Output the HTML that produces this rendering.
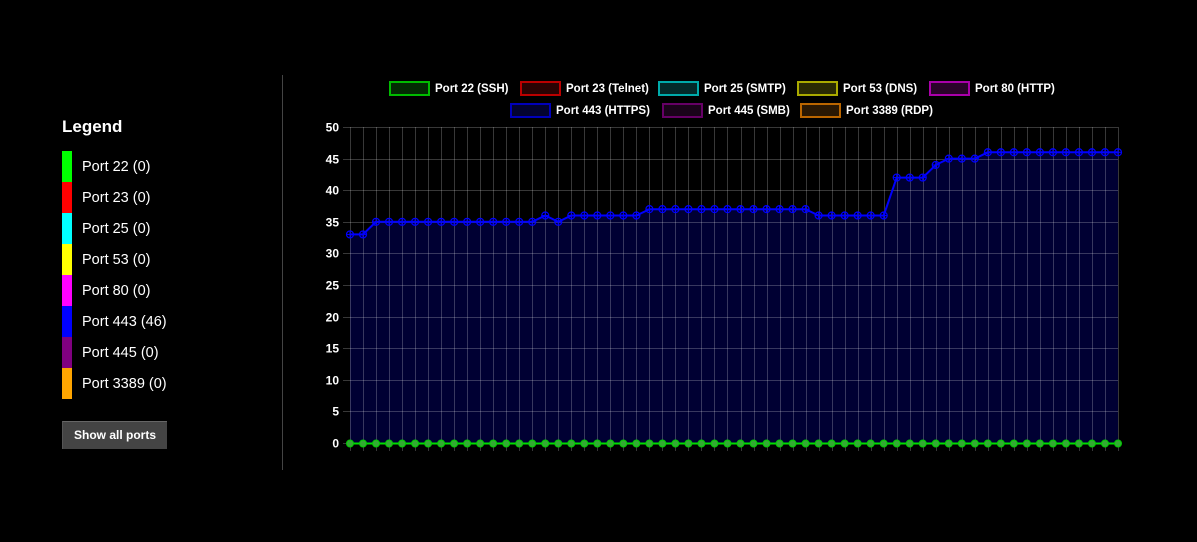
<!DOCTYPE html>
<html><head><meta charset="utf-8"><style>
html,body{margin:0;padding:0;background:#000;width:1197px;height:542px;overflow:hidden;font-family:"Liberation Sans",Arial,sans-serif;color:#fff}
.lg{position:absolute;left:62px;top:117px;width:200px}
.lg h3{margin:0;font-size:17px;font-weight:bold;height:34px}
.row{height:31px;position:relative}
.sw{position:absolute;left:0;top:0;width:10px;height:31px}
.row span{position:absolute;left:20px;top:8px;font-size:14.5px;white-space:nowrap}
.btn{position:absolute;left:62px;top:421px;width:104px;height:27px;background:#444;border-top:1px solid #666;border-left:1px solid #555;font-size:12px;line-height:27px;text-align:center;font-weight:bold}
.div{position:absolute;left:282px;top:75px;width:1px;height:395px;background:#444}
.cl{position:absolute;font-size:11.5px;font-weight:bold;white-space:nowrap}
.cl i{display:inline-block;width:37px;height:11px;border:2px solid;vertical-align:-4px;margin-right:5px}
</style></head><body>
<div class="lg"><h3>Legend</h3>
<div class="row"><div class="sw" style="background:#0f0"></div><span>Port 22 (0)</span></div>
<div class="row"><div class="sw" style="background:#f00"></div><span>Port 23 (0)</span></div>
<div class="row"><div class="sw" style="background:#0ff"></div><span>Port 25 (0)</span></div>
<div class="row"><div class="sw" style="background:#ff0"></div><span>Port 53 (0)</span></div>
<div class="row"><div class="sw" style="background:#f0f"></div><span>Port 80 (0)</span></div>
<div class="row"><div class="sw" style="background:#00f"></div><span>Port 443 (46)</span></div>
<div class="row"><div class="sw" style="background:#800080"></div><span>Port 445 (0)</span></div>
<div class="row"><div class="sw" style="background:#ffa500"></div><span>Port 3389 (0)</span></div>
</div>
<div class="btn">Show all ports</div>
<div class="div"></div>
<div class="cl" style="left:389px;top:81px"><i style="border-color:#0b0;background:#032a03"></i>Port 22 (SSH)</div>
<div class="cl" style="left:520px;top:81px"><i style="border-color:#b00;background:#2a0303"></i>Port 23 (Telnet)</div>
<div class="cl" style="left:658px;top:81px"><i style="border-color:#0aa;background:#032a2a"></i>Port 25 (SMTP)</div>
<div class="cl" style="left:797px;top:81px"><i style="border-color:#aa0;background:#2a2a03"></i>Port 53 (DNS)</div>
<div class="cl" style="left:929px;top:81px"><i style="border-color:#a0a;background:#2a032a"></i>Port 80 (HTTP)</div>
<div class="cl" style="left:510px;top:103px"><i style="border-color:#00b;background:#030330"></i>Port 443 (HTTPS)</div>
<div class="cl" style="left:662px;top:103px"><i style="border-color:#606;background:#1a031a"></i>Port 445 (SMB)</div>
<div class="cl" style="left:800px;top:103px"><i style="border-color:#b60;background:#2a1803"></i>Port 3389 (RDP)</div>
<svg id="c" width="1197" height="542" style="position:absolute;left:0;top:0"></svg>
<script>
var v=[33,33];for(var i=2;i<=14;i++)v.push(35);v.push(36,35);for(i=17;i<=22;i++)v.push(36);
for(i=23;i<=35;i++)v.push(37);for(i=36;i<=41;i++)v.push(36);v.push(42,42,42,44,45,45,45);
while(v.length<60)v.push(46);
var X=function(i){return 350+i*768/59},Y=function(d){return 443-d*316/50};
var s='';
var pts=v.map(function(d,i){return X(i).toFixed(1)+','+Y(d).toFixed(1)}).join(' ');
s+='<polygon points="350,443 '+pts+' 1118,443" fill="#000033"/>';
for(i=0;i<60;i++){var x=Math.round(X(i))+0.5;s+='<line x1="'+x+'" y1="127" x2="'+x+'" y2="451" stroke="rgba(255,255,255,0.22)" stroke-width="1"/>';}
for(var k=0;k<=10;k++){var y=Math.round(Y(k*5))+0.5;s+='<line x1="343" y1="'+y+'" x2="1118" y2="'+y+'" stroke="rgba(255,255,255,0.22)"/>';
s+='<text x="339" y="'+(y+4)+'" text-anchor="end" fill="#fff" font-size="12" font-weight="bold" font-family="Liberation Sans">'+k*5+'</text>';}
s+='<polyline points="'+pts+'" fill="none" stroke="#00f" stroke-width="2"/>';
for(i=0;i<60;i++){var x=X(i),y=Y(v[i]);s+='<circle cx="'+x+'" cy="'+y+'" r="3.5" fill="none" stroke="#00f" stroke-width="1.2"/><line x1="'+(x-3.5)+'" y1="'+y+'" x2="'+(x+3.5)+'" y2="'+y+'" stroke="#00f"/><line x1="'+x+'" y1="'+(y-3.5)+'" x2="'+x+'" y2="'+(y+3.5)+'" stroke="#00f"/>';}
s+='<line x1="350" y1="443.5" x2="1118" y2="443.5" stroke="#0d0" stroke-width="2"/>';
for(i=0;i<60;i++){s+='<circle cx="'+X(i)+'" cy="443.5" r="3.5" fill="#3a3" stroke="#0c0"/>';}
document.getElementById('c').innerHTML=s;
</script>
</body></html>
